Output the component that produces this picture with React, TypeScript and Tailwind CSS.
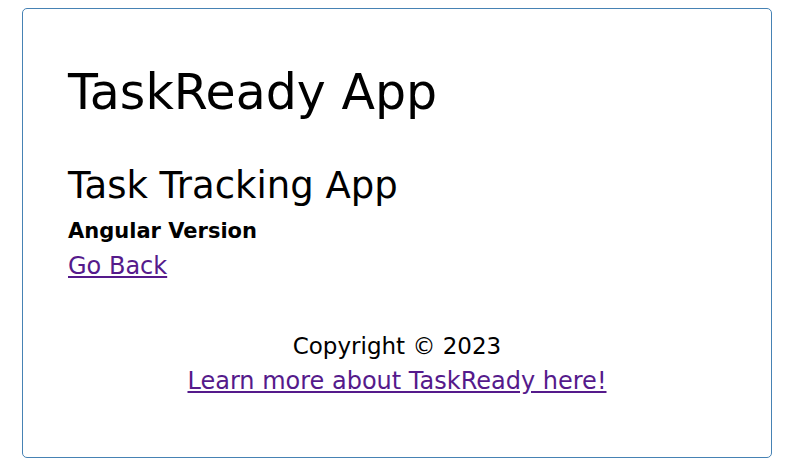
export default function App() {
   return (
      <div className="w-[796px] h-[474px] bg-white pt-[8px] pl-[22px] font-['DejaVu_Sans',sans-serif] text-black">
         <div className="w-[750px] h-[450px] rounded-[5px] border border-[#4682b4] px-[45px] pt-[52px]">
            <h1 className="text-[49px] leading-[64px] font-normal">TaskReady App</h1>
            <h2 className="mt-[39px] text-[37px] leading-[44px] font-normal">Task Tracking App</h2>
            <h3 className="mt-[7px] text-[21px] leading-[33px] font-bold">Angular Version</h3>
            <a href="#" className="block w-fit text-[24px] leading-[36px] text-[#551a8b] underline">Go Back</a>
            <div className="mt-[44px] flex flex-col items-center">
               <p className="text-[23px] leading-[36px]">Copyright © 2023</p>
               <a href="#" className="text-[24px] leading-[34px] text-[#551a8b] underline">Learn more about TaskReady here!</a>
            </div>
         </div>
      </div>
   );
}
